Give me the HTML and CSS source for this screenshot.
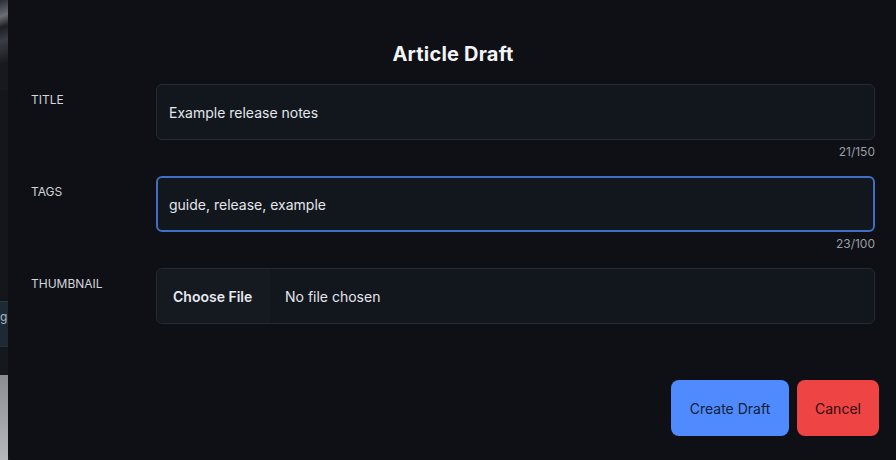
FILE: index.html
```html
<html>
    <head>
        <link rel="stylesheet" href="styles.css">
    </head>
    <body>
        <div class="page">
            <div class="page-art"></div>
            <div class="page-gap"></div>
            <div class="page-tag">g</div>
            <div class="page-rule"></div>
            <div class="page-photo"></div>
        </div>

        <div class="modal">
            <h2 class="modal-title">Article Draft</h2>

            <div class="field">
                <label class="field-label" for="title">TITLE</label>
                <div class="field-body">
                    <input id="title" class="text-input" type="text" value="Example release notes">
                    <div class="counter">21/150</div>
                </div>
            </div>

            <div class="field">
                <label class="field-label" for="tags">TAGS</label>
                <div class="field-body">
                    <input id="tags" class="text-input focused" type="text" value="guide, release, example">
                    <div class="counter">23/100</div>
                </div>
            </div>

            <div class="field">
                <label class="field-label" for="thumb">THUMBNAIL</label>
                <div class="field-body">
                    <div class="file-input">
                        <span class="file-button">Choose File</span>
                        <span class="file-name">No file chosen</span>
                    </div>
                </div>
            </div>

            <div class="actions">
                <button class="btn btn-primary">Create Draft</button>
                <button class="btn btn-danger">Cancel</button>
            </div>
        </div>
    </body>
</html>
```

FILE: styles.css
```css
body {
  margin: 0;
  width: 896px;
  height: 460px;
  overflow: hidden;
  background: #16181d;
  font-family: Inter, "Noto Sans", sans-serif;
}

/* page behind the dialog, only a sliver shows */
.page {
  display: flex;
  flex-flow: column;
  width: 8px;
  height: 460px;
}

.page-art {
  height: 90px;
  background: linear-gradient(160deg, #2a2c33 0%, #6b6e76 18%, #1d1f25 30%, #3a3d44 45%, #17191e 70%);
}

.page-gap {
  flex-grow: 1;
  background: #14161b;
}

.page-tag {
  height: 44px;
  line-height: 30px;
  background: #1d2a33;
  color: #a9b8c4;
  font-size: 12px;
  border-top: 1px solid #2a3640;
}

.page-rule {
  height: 28px;
  background: #15181d;
  border-top: 1px solid #2a2d33;
}

.page-photo {
  height: 85px;
  background: linear-gradient(180deg, #8b8d93, #b6b7bc);
}

.modal {
  position: absolute;
  left: 8px;
  top: -14px;
  width: 898px;
  height: 478px;
  box-sizing: border-box;
  padding: 55px 31px 0 23px;
  background: #0e1015;
  border-radius: 12px;
  color: #e6e8ec;
}

.modal-title {
  margin: 0 0 17px 0;
  text-align: center;
  font-size: 20px;
  font-weight: 700;
  line-height: 26px;
  letter-spacing: 0.2px;
  color: #f3f4f6;
}

.field {
  display: flex;
  margin-bottom: 16px;
}

.field-label {
  width: 125px;
  flex-shrink: 0;
  padding-top: 9px;
  font-size: 12px;
  line-height: 14px;
  color: #d4d6da;
}

.field-body {
  width: 719px;
}

.text-input {
  display: block;
  width: 100%;
  height: 56px;
  box-sizing: border-box;
  padding: 0 12px;
  background: #12161d;
  border: 1px solid #272c34;
  border-radius: 6px;
  color: #e5e7eb;
  font-family: inherit;
  font-size: 14px;
  outline: none;
}

.text-input.focused {
  border: 2px solid #3f6fc4;
  padding: 0 11px;
}

.counter {
  height: 20px;
  line-height: 24px;
  text-align: right;
  font-size: 12px;
  color: #9a9ea6;
}

.file-input {
  display: flex;
  align-items: stretch;
  height: 56px;
  box-sizing: border-box;
  background: #12161d;
  border: 1px solid #272c34;
  border-radius: 6px;
  overflow: hidden;
  font-size: 14px;
}

.file-button {
  display: flex;
  align-items: center;
  padding: 0 16px;
  width: 113px;
  box-sizing: border-box;
  background: #151920;
  font-weight: 600;
  color: #e8eaee;
}

.file-name {
  display: flex;
  align-items: center;
  padding-left: 15px;
  color: #e5e7eb;
}

.actions {
  display: flex;
  justify-content: flex-end;
  gap: 8px;
  margin-top: 56px;
  margin-right: -4px;
}

.btn {
  height: 56px;
  padding: 0 16px;
  border: none;
  border-radius: 8px;
  font-family: inherit;
  font-size: 14px;
  color: #0f1c36;
}

.btn-primary {
  width: 118px;
  background: #4f8bff;
}

.btn-danger {
  width: 82px;
  background: #ef4444;
  color: #2e0b0b;
}
```
